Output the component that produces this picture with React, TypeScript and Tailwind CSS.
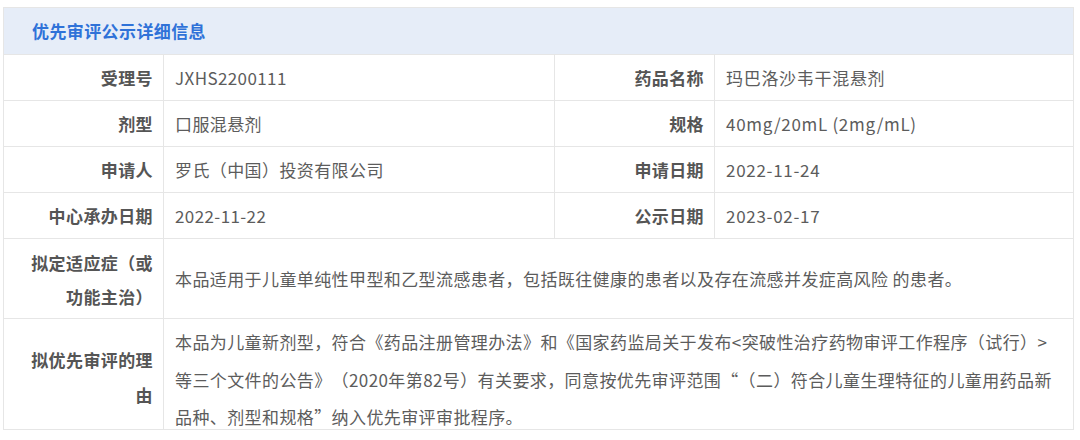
import React from 'react';

const font = { fontFamily: '"Noto Sans CJK SC", "Noto Sans", sans-serif' };

const shortRows: [string, string, string, string][] = [
  ['受理号', 'JXHS2200111', '药品名称', '玛巴洛沙韦干混悬剂'],
  ['剂型', '口服混悬剂', '规格', '40mg/20mL (2mg/mL)'],
  ['申请人', '罗氏（中国）投资有限公司', '申请日期', '2022-11-24'],
  ['中心承办日期', '2022-11-22', '公示日期', '2023-02-17'],
];

function Label({ children, className = '' }: { children: React.ReactNode; className?: string }) {
  return (
    <div className={`border-r border-b border-[#e6e6e6] pr-[10px] pl-2 text-right font-bold text-[#555] ${className}`}>
      {children}
    </div>
  );
}

function Value({ children, className = '' }: { children: React.ReactNode; className?: string }) {
  return (
    <div className={`border-b border-[#e6e6e6] pl-[11px] pr-3 text-[#5c5c5c] ${className}`}>
      {children}
    </div>
  );
}

export default function App() {
  return (
    <div className="bg-white w-[1080px] h-[440px] pt-[7px] pl-[3px]" style={font}>
      <div className="w-[1071px] border-t border-l border-r border-[#e6e6e6] text-[17px] tracking-[0.4px] [text-spacing-trim:space-all]">
        <div className="h-[47px] bg-[#e6edf8] border-b border-[#e6e6e6] flex items-center pl-[28px] font-bold text-[#2f72d8]">
          优先审评公示详细信息
        </div>
        <div className="grid grid-cols-[160px_391px_160px_1fr]">
          {shortRows.map(([l1, v1, l2, v2]) => (
            <React.Fragment key={l1}>
              <Label className="h-[46px] leading-[45px]">{l1}</Label>
              <Value className="h-[46px] leading-[45px] border-r">{v1}</Value>
              <Label className="h-[46px] leading-[45px]">{l2}</Label>
              <Value className="h-[46px] leading-[45px] tracking-[0.7px]">{v2}</Value>
            </React.Fragment>
          ))}
          <Label className="h-[80px] leading-[34px] pt-[7px] pl-4">拟定适应症（或功能主治）</Label>
          <Value className="col-span-3 h-[80px] flex items-center">
            本品适用于儿童单纯性甲型和乙型流感患者，包括既往健康的患者以及存在流感并发症高风险 的患者。
          </Value>
          <Label className="h-[111px] leading-[35px] pt-[23px] pl-4">拟优先审评的理由</Label>
          <Value className="col-span-3 h-[111px] leading-[37.5px] pt-[4px] pr-[20px]">
            本品为儿童新剂型，符合《药品注册管理办法》和《国家药监局关于发布&lt;突破性治疗药物审评工作程序（试行）&gt;等三个文件的公告》（2020年第82号）有关要求，同意按优先审评范围“（二）符合儿童生理特征的儿童用药品新品种、剂型和规格”纳入优先审评审批程序。
          </Value>
        </div>
      </div>
    </div>
  );
}
